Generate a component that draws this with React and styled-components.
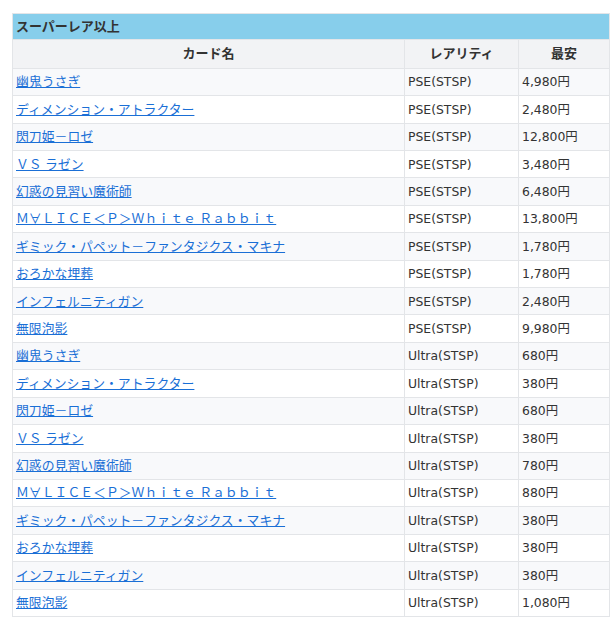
import React from 'react'
import styled, { createGlobalStyle } from 'styled-components'

const GlobalStyle = createGlobalStyle`
	body {
		margin: 0;
		background: #fff;
		font-family: "Open Sans", "Noto Sans CJK JP", sans-serif;
		color: #333;
	}
`

const Page = styled.div`
	padding: 13px 0 0 12px;
`

const Table = styled.table`
	width: 597px;
	border-collapse: collapse;
	border: 1px solid #e3e5e8;
	font-size: 13px;
	line-height: 19.4px;
	table-layout: fixed;
`

const Caption = styled.th`
	background: #87ceeb;
	text-align: left;
	font-weight: bold;
	padding: 3px 3px;
	color: #333;
	border: 1px solid #e3e5e8;
`

const HeadCell = styled.th`
	background: #f2f3f5;
	font-weight: bold;
	text-align: center;
	padding: 4px 4px;
	border: 1px solid #e3e5e8;
	color: #333;
`

const Row = styled.tr`
	background: ${(p) => (p.$alt ? '#f8f9fb' : '#fff')};
`

const Cell = styled.td`
	padding: 3.5px 3px;
	border: 1px solid #e3e5e8;
	white-space: nowrap;
	color: #333;
	font-family: ${(p) => (p.$latin ? '"DejaVu Sans", "Noto Sans CJK JP", sans-serif' : 'inherit')};
	font-size: ${(p) => (p.$latin ? '12.4px' : '12.85px')};
`

const CardLink = styled.a`
	color: #1a6fd6;
	text-decoration: underline;
`

const cards = [
	'幽鬼うさぎ',
	'ディメンション・アトラクター',
	'閃刀姫－ロゼ',
	'ＶＳ ラゼン',
	'幻惑の見習い魔術師',
	'Ｍ∀ＬＩＣＥ＜Ｐ＞Ｗｈｉｔｅ Ｒａｂｂｉｔ',
	'ギミック・パペット－ファンタジクス・マキナ',
	'おろかな埋葬',
	'インフェルニティガン',
	'無限泡影',
]

const psePrices = ['4,980', '2,480', '12,800', '3,480', '6,480', '13,800', '1,780', '1,780', '2,480', '9,980']
const ultraPrices = ['680', '380', '680', '380', '780', '880', '380', '380', '380', '1,080']

const rows = [
	...cards.map((name, i) => ({ name, rarity: 'PSE(STSP)', price: psePrices[i] })),
	...cards.map((name, i) => ({ name, rarity: 'Ultra(STSP)', price: ultraPrices[i] })),
]

export default function App() {
	return (
		<Page>
			<GlobalStyle />
			<Table>
				<colgroup>
					<col style={{ width: 392 }} />
					<col style={{ width: 114 }} />
					<col style={{ width: 91 }} />
				</colgroup>
				<thead>
					<tr>
						<Caption colSpan={3}>スーパーレア以上</Caption>
					</tr>
					<tr>
						<HeadCell>カード名</HeadCell>
						<HeadCell>レアリティ</HeadCell>
						<HeadCell>最安</HeadCell>
					</tr>
				</thead>
				<tbody>
					{rows.map((r, i) => (
						<Row key={i} $alt={i % 2 === 0}>
							<Cell>
								<CardLink href="#">{r.name}</CardLink>
							</Cell>
							<Cell $latin>{r.rarity}</Cell>
							<Cell $latin>{r.price}円</Cell>
						</Row>
					))}
				</tbody>
			</Table>
		</Page>
	)
}
